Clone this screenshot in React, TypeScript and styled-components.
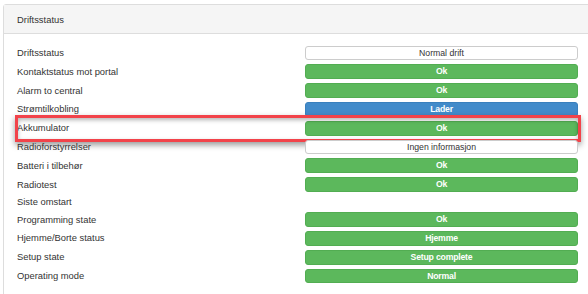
import React from "react";
import styled, { createGlobalStyle } from "styled-components";

const Global = createGlobalStyle`
  html, body { margin: 0; padding: 0; background: #fff; overflow: hidden; }
  body { font-family: "Liberation Sans", Arial, sans-serif; color: #333; }
`;

const Page = styled.div`
  box-sizing: border-box;
  width: 588px;
  height: 294px;
  overflow: hidden;
  padding: 4px 0 0 3px;
`;

const Panel = styled.section`
  width: 620px;
  border: 1px solid #dddddd;
  border-radius: 3px;
  background: #fff;
  min-height: 320px;
`;

const PanelHeader = styled.header`
  background: #f5f5f5;
  border-bottom: 1px solid #dddddd;
  height: 28px;
  display: flex;
  align-items: center;
  padding-left: 13px;
  font-size: 9.4px;
  color: #333;
`;

const PanelBody = styled.div`
  padding: 11.6px 13px;
`;

const List = styled.div`
  width: 561px;
  display: flex;
  flex-direction: column;
  gap: 4px;
`;

const Row = styled.div<{ $highlight?: boolean }>`
  position: relative;
  display: grid;
  grid-template-columns: 288px 273px;
  align-items: center;
  min-height: 12.2px;
  ${(p) =>
    p.$highlight &&
    `
    &::after {
      content: "";
      position: absolute;
      top: -6px;
      bottom: -6px;
      left: -2px;
      right: -3px;
      border: 3px solid #f2434a;
      box-shadow: 0 3px 6px rgba(0,0,0,0.4), inset 0 2px 4px rgba(0,0,0,0.3);
      pointer-events: none;
    }
  `}
`;

const Label = styled.div`
  font-size: 9.4px;
  line-height: 12px;
  color: #333;
`;

const tones = {
  default: { bg: "#ffffff", border: "#cccccc", color: "#333" },
  success: { bg: "#5cb85c", border: "#52ad52", color: "#fff" },
  primary: { bg: "#428bca", border: "#3a80bd", color: "#fff" },
};

type Tone = keyof typeof tones;

const Badge = styled.div<{ $tone: Tone }>`
  box-sizing: border-box;
  height: 14.8px;
  border-radius: 3px;
  border: 1px solid ${(p) => tones[p.$tone].border};
  background: ${(p) => tones[p.$tone].bg};
  color: ${(p) => tones[p.$tone].color};
  font-size: 8.7px;
  font-weight: ${(p) => (p.$tone === "default" ? 400 : 700)};
  display: flex;
  align-items: center;
  justify-content: center;
  line-height: 1;
  ${(p) => p.$tone !== "default" && "letter-spacing: -0.2px;"}
`;

const rows: { label: string; value?: string; tone?: Tone; highlight?: boolean }[] = [
  { label: "Driftsstatus", value: "Normal drift", tone: "default" },
  { label: "Kontaktstatus mot portal", value: "Ok", tone: "success" },
  { label: "Alarm to central", value: "Ok", tone: "success" },
  { label: "Strømtilkobling", value: "Lader", tone: "primary" },
  { label: "Akkumulator", value: "Ok", tone: "success", highlight: true },
  { label: "Radioforstyrrelser", value: "Ingen informasjon", tone: "default" },
  { label: "Batteri i tilbehør", value: "Ok", tone: "success" },
  { label: "Radiotest", value: "Ok", tone: "success" },
  { label: "Siste omstart" },
  { label: "Programming state", value: "Ok", tone: "success" },
  { label: "Hjemme/Borte status", value: "Hjemme", tone: "success" },
  { label: "Setup state", value: "Setup complete", tone: "success" },
  { label: "Operating mode", value: "Normal", tone: "success" },
];

export default function App() {
  return (
    <Page>
      <Global />
      <Panel>
        <PanelHeader>Driftsstatus</PanelHeader>
        <PanelBody>
          <List>
            {rows.map((r) => (
              <Row key={r.label} $highlight={r.highlight}>
                <Label>{r.label}</Label>
                {r.value ? <Badge $tone={r.tone!}>{r.value}</Badge> : <span />}
              </Row>
            ))}
          </List>
        </PanelBody>
      </Panel>
    </Page>
  );
}
